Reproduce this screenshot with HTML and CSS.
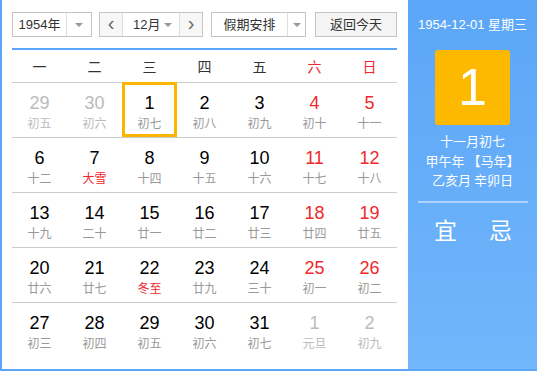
FILE: index.html
```html
<!DOCTYPE html>
<html lang="zh-CN">
<head>
    <meta charset="UTF-8">
    <title>万年历</title>
    <link rel="stylesheet" href="styles.css">
</head>
<body>
    <div class="calendar">
        <div class="main">
            <div class="toolbar">
                <div class="select year-select">
                    <span class="select-text">1954年</span>
                    <span class="select-arrow"><i></i></span>
                </div>
                <div class="month-group">
                    <span class="nav-btn">&lsaquo;</span>
                    <div class="month-select">
                        <span class="select-text">12月</span>
                        <i></i>
                    </div>
                    <span class="nav-btn">&rsaquo;</span>
                </div>
                <div class="select holiday-select">
                    <span class="select-text">假期安排</span>
                    <span class="select-arrow"><i></i></span>
                </div>
                <span class="today-btn">返回今天</span>
            </div>

            <div class="weekdays">
                <span>一</span>
                <span>二</span>
                <span>三</span>
                <span>四</span>
                <span>五</span>
                <span class="weekend">六</span>
                <span class="weekend">日</span>
            </div>

            <div class="days">
                <div class="week">
                    <div class="day other"><b>29</b><small>初五</small></div>
                    <div class="day other"><b>30</b><small>初六</small></div>
                    <div class="day selected"><b>1</b><small>初七</small></div>
                    <div class="day"><b>2</b><small>初八</small></div>
                    <div class="day"><b>3</b><small>初九</small></div>
                    <div class="day weekend"><b>4</b><small>初十</small></div>
                    <div class="day weekend"><b>5</b><small>十一</small></div>
                </div>
                <div class="week">
                    <div class="day"><b>6</b><small>十二</small></div>
                    <div class="day"><b>7</b><small class="term">大雪</small></div>
                    <div class="day"><b>8</b><small>十四</small></div>
                    <div class="day"><b>9</b><small>十五</small></div>
                    <div class="day"><b>10</b><small>十六</small></div>
                    <div class="day weekend"><b>11</b><small>十七</small></div>
                    <div class="day weekend"><b>12</b><small>十八</small></div>
                </div>
                <div class="week">
                    <div class="day"><b>13</b><small>十九</small></div>
                    <div class="day"><b>14</b><small>二十</small></div>
                    <div class="day"><b>15</b><small>廿一</small></div>
                    <div class="day"><b>16</b><small>廿二</small></div>
                    <div class="day"><b>17</b><small>廿三</small></div>
                    <div class="day weekend"><b>18</b><small>廿四</small></div>
                    <div class="day weekend"><b>19</b><small>廿五</small></div>
                </div>
                <div class="week">
                    <div class="day"><b>20</b><small>廿六</small></div>
                    <div class="day"><b>21</b><small>廿七</small></div>
                    <div class="day"><b>22</b><small class="term">冬至</small></div>
                    <div class="day"><b>23</b><small>廿九</small></div>
                    <div class="day"><b>24</b><small>三十</small></div>
                    <div class="day weekend"><b>25</b><small>初一</small></div>
                    <div class="day weekend"><b>26</b><small>初二</small></div>
                </div>
                <div class="week">
                    <div class="day"><b>27</b><small>初三</small></div>
                    <div class="day"><b>28</b><small>初四</small></div>
                    <div class="day"><b>29</b><small>初五</small></div>
                    <div class="day"><b>30</b><small>初六</small></div>
                    <div class="day"><b>31</b><small>初七</small></div>
                    <div class="day other"><b>1</b><small>元旦</small></div>
                    <div class="day other"><b>2</b><small>初九</small></div>
                </div>
            </div>
        </div>

        <div class="side">
            <div class="side-date">1954-12-01 星期三</div>
            <div class="big-day">1</div>
            <div class="lunar">
                <p>十一月初七</p>
                <p>甲午年 【马年】</p>
                <p>乙亥月 辛卯日</p>
            </div>
            <div class="yiji">
                <span>宜</span>
                <span>忌</span>
            </div>
        </div>
    </div>
</body>
</html>
```

FILE: styles.css
```css
* {
    box-sizing: border-box;
}
body {
    margin: 0;
    font-family: "Liberation Sans", "Noto Sans CJK SC", sans-serif;
    color: #333;
}
.calendar {
    display: flex;
    width: 537px;
    height: 371px;
    border-left: 2px solid #5ba6f8;
    border-bottom: 2px solid #5ba6f8;
}
.main {
    width: 406px;
    padding: 12px 11px 0 10px;
    background: #fff;
}

/* toolbar */
.toolbar {
    display: flex;
    height: 25px;
    font-size: 13px;
}
.select {
    display: flex;
    border: 1px solid #c4c4c4;
    background: #fff;
}
.select-text {
    flex: 1;
    line-height: 23px;
    text-align: center;
}
.select-arrow {
    display: flex;
    align-items: center;
    justify-content: center;
    border-left: 1px solid #ddd;
}
.select i,
.month-select i {
    width: 0;
    height: 0;
    border-left: 4px solid transparent;
    border-right: 4px solid transparent;
    border-top: 4px solid #999;
}
.year-select {
    width: 80px;
}
.year-select .select-arrow {
    width: 25px;
}
.month-group {
    display: flex;
    width: 104px;
    margin-left: 7px;
    border: 1px solid #c4c4c4;
}
.nav-btn {
    width: 22px;
    line-height: 21px;
    text-align: center;
    font-size: 20px;
    color: #666;
    background: #f7f7f7;
}
.month-select {
    display: flex;
    align-items: center;
    flex: 1;
    padding: 0 7px 0 10px;
    border-left: 1px solid #ddd;
    border-right: 1px solid #ddd;
    background: #fff;
}
.month-select .select-text {
    text-align: left;
}
.holiday-select {
    width: 95px;
    margin-left: 8px;
}
.holiday-select .select-arrow {
    width: 18px;
}
.today-btn {
    width: 82px;
    margin-left: 9px;
    border: 1px solid #c4c4c4;
    background: #f5f5f5;
    line-height: 23px;
    text-align: center;
}

/* grid */
.weekdays {
    display: flex;
    margin-top: 11px;
    height: 35px;
    border-top: 2px solid #5ba6f8;
    border-bottom: 1px solid #ccc;
    font-family: "Noto Sans CJK SC", sans-serif;
    font-size: 14px;
}
.weekdays span {
    flex: 1;
    line-height: 32px;
    text-align: center;
}
.weekdays .weekend {
    color: #f0282d;
}
.week {
    display: flex;
    height: 55px;
    border-bottom: 1px solid #ccc;
}
.week:last-child {
    border-bottom: none;
}
.day {
    width: 55px;
    padding-top: 10px;
    text-align: center;
}
.day b {
    display: block;
    font-weight: normal;
    font-size: 18px;
    line-height: 20px;
    color: #000;
}
.day small {
    display: block;
    font-family: "Noto Sans CJK SC", sans-serif;
    font-size: 12px;
    line-height: 20px;
    color: #999;
}
.day.weekend b,
.day .term {
    color: #f0282d;
}
.day.other b,
.day.other small {
    color: #bbb;
}
.day.selected {
    height: 55px;
    margin-top: -1px;
    padding-top: 8px;
    border: 3px solid #fbb600;
}

/* side panel */
.side {
    width: 129px;
    background: linear-gradient(#5ba6f7, #72b6fb);
    color: #fff;
    text-align: center;
}
.side-date {
    margin-top: 17px;
    font-size: 13px;
    line-height: 16px;
}
.big-day {
    width: 75px;
    height: 75px;
    margin: 17px auto 0;
    border-radius: 3px;
    background: #fdb800;
    font-size: 52px;
    line-height: 75px;
}
.lunar {
    margin-top: 6px;
    font-family: "Noto Sans CJK SC", sans-serif;
    font-size: 13px;
}
.lunar p {
    margin: 0;
    line-height: 19.5px;
}
.yiji {
    display: flex;
    justify-content: center;
    gap: 32px;
    margin: 11px 9px 0 10px;
    padding-top: 11px;
    border-top: 2px solid rgba(255, 255, 255, 0.45);
    font-family: "Noto Sans CJK SC", sans-serif;
    font-size: 23px;
    line-height: 30px;
}
```
